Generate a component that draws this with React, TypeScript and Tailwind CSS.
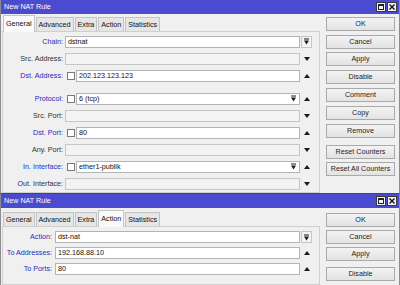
import React from "react"

type Row = {
  label: string
  active?: boolean
  kind: "combo" | "disabled" | "check" | "text"
  value?: string
  drop?: boolean
  arrow?: "up" | "down"
  gapBefore?: boolean
}

const topRows: Row[] = [
  { label: "Chain:", active: true, kind: "combo", value: "dstnat" },
  { label: "Src. Address:", kind: "disabled", arrow: "down" },
  { label: "Dst. Address:", active: true, kind: "check", value: "202.123.123.123", arrow: "up" },
  { label: "Protocol:", active: true, kind: "check", value: "6 (tcp)", drop: true, arrow: "up", gapBefore: true },
  { label: "Src. Port:", kind: "disabled", arrow: "down" },
  { label: "Dst. Port:", active: true, kind: "check", value: "80", arrow: "up" },
  { label: "Any. Port:", kind: "disabled", arrow: "down" },
  { label: "In. Interface:", active: true, kind: "check", value: "ether1-publik", drop: true, arrow: "up" },
  { label: "Out. Interface:", kind: "disabled", arrow: "down" },
]

const bottomRows: Row[] = [
  { label: "Action:", active: true, kind: "combo", value: "dst-nat" },
  { label: "To Addresses:", active: true, kind: "text", value: "192.168.88.10", arrow: "up" },
  { label: "To Ports:", active: true, kind: "text", value: "80", arrow: "up" },
]

const tabs = ["General", "Advanced", "Extra", "Action", "Statistics"]

const DropIcon = () => (
  <svg width="5" height="7" viewBox="0 0 5 7">
    <rect x="0" y="0.5" width="5" height="1" fill="#1a1a1a" />
    <path d="M0 2.5h5L2.5 6.5z" fill="#1a1a1a" />
  </svg>
)

const Arrow = ({ dir }: { dir: "up" | "down" }) => (
  <svg width="6" height="4" viewBox="0 0 6 4">
    {dir == "up" ? <path d="M0 4h6L3 0z" fill="#1a1a1a" /> : <path d="M0 0h6L3 4z" fill="#1a1a1a" />}
  </svg>
)

const TitleBar = ({ title }: { title: string }) => (
  <div className="flex h-[14px] items-center justify-between bg-[#4b4bd0] pl-[3px] pr-[2px] text-white">
    <span>{title}</span>
    <div className="flex gap-[1px]">
      {/* maximize */}
      <div className="flex h-[10px] w-[10px] items-center justify-center border border-[#3a3a3a] bg-[#f2f2f2]">
        <div className="h-[6px] w-[6px] border border-[#222] border-t-2"></div>
      </div>
      {/* close */}
      <div className="flex h-[10px] w-[10px] items-center justify-center border border-[#3a3a3a] bg-[#f2f2f2]">
        <svg width="6" height="6" viewBox="0 0 6 6">
          <path d="M0.5 0.5l5 5M5.5 0.5l-5 5" stroke="#111" strokeWidth="1.4" />
        </svg>
      </div>
    </div>
  </div>
)

const Tabs = ({ selected }: { selected: string }) => (
  <div className="relative z-10 flex h-[17px] items-end gap-[1px] pl-[1px]">
    {tabs.map(t =>
      t == selected ? (
        <div key={t} className="-mb-px flex h-[17px] items-center border border-b-0 border-[#c4c4c4] bg-[#fafafa] px-[2px] pb-[1px] text-[#111]">
          {t}
        </div>
      ) : (
        <div key={t} className="flex h-[14px] items-center border border-b-0 border-[#c4c4c4] bg-[#e6e6e6] px-[2px] text-[#111]">
          {t}
        </div>
      )
    )}
  </div>
)

const Input = ({ value, white, drop, className }: { value?: string; white?: boolean; drop?: boolean; className?: string }) => (
  <div
    className={`flex h-[12px] items-center justify-between border pl-[2px] pr-[3px] text-[#111] ${
      white ? "border-[#b4b4b4] bg-white" : "border-[#c6c6c6] bg-[#f3f3f3]"
    } ${className ?? ""}`}
  >
    <span>{value}</span>
    {drop && <DropIcon />}
  </div>
)

const FieldRow = ({ row, labelW, fieldW, gap, h }: { row: Row; labelW: string; fieldW: string; gap: string; h: string }) => (
  <div className={`flex ${h} items-center ${row.gapBefore ? "mt-[6px]" : ""}`}>
    <span className={`${labelW} shrink-0 text-right ${row.active ? "text-[#2b2bbd]" : "text-[#303030]"}`}>{row.label}</span>
    <div className={`${gap} flex ${fieldW} shrink-0 items-center`}>
      {row.kind == "check" && (
        <>
          <div className="ml-[2px] h-[8px] w-[8px] shrink-0 border border-[#7a7a7a] bg-white"></div>
          <Input value={row.value} white drop={row.drop} className="ml-[1px] flex-1" />
        </>
      )}
      {row.kind == "disabled" && <Input className="flex-1" />}
      {(row.kind == "text" || row.kind == "combo") && <Input value={row.value} white className="flex-1" />}
    </div>
    {row.kind == "combo" ? (
      <div className="ml-[1px] flex h-[12px] w-[11px] items-center justify-center border border-[#c6c6c6] bg-[#f3f3f3]">
        <DropIcon />
      </div>
    ) : (
      <div className="flex pl-[4px]">{row.arrow && <Arrow dir={row.arrow} />}</div>
    )}
  </div>
)

const Btn = ({ label, mt }: { label: string; mt: string }) => (
  <div className={`${mt} flex h-[14px] w-[69px] items-center justify-center border border-[#a9a9a9] bg-gradient-to-b from-[#f3f3f3] to-[#e3e3e3] text-[#1e1e1e]`}>
    {label}
  </div>
)

const App = () => {
  return (
    <div className="h-[285px] w-[400px] overflow-hidden bg-[#f0f0f0] font-['Liberation_Sans',Arial,sans-serif] text-[7.2px] leading-none">
      {/* top window */}
      <div className="flex h-[193px] flex-col border-x border-[#8c8c8c] bg-[#f0f0f0]">
        <TitleBar title="New NAT Rule" />
        <div className="flex flex-1">
          <div className="ml-[1px] flex w-[318px] flex-col">
            <Tabs selected="General" />
            <div className="flex-1 border border-[#cfcfcf] pt-[1px]">
              {topRows.map(r => (
                <FieldRow key={r.label} row={r} labelW="w-[60px]" fieldW="w-[235px]" gap="ml-[2px]" h="h-[17px]" />
              ))}
            </div>
          </div>
          <div className="flex flex-col pl-[6px] pt-[3px]">
            <Btn label="OK" mt="mt-0" />
            <Btn label="Cancel" mt="mt-[4px]" />
            <Btn label="Apply" mt="mt-[3px]" />
            <Btn label="Disable" mt="mt-[4px]" />
            <Btn label="Comment" mt="mt-[4px]" />
            <Btn label="Copy" mt="mt-[4px]" />
            <Btn label="Remove" mt="mt-[4px]" />
            <Btn label="Reset Counters" mt="mt-[7px]" />
            <Btn label="Reset All Counters" mt="mt-[3px]" />
          </div>
        </div>
      </div>

      {/* bottom window */}
      <div className="flex h-[92px] flex-col border-x border-t border-[#8c8c8c] border-t-[#4a4a4a] bg-[#f0f0f0]">
        <TitleBar title="New NAT Rule" />
        <div className="flex flex-1">
          <div className="ml-[1px] flex w-[318px] flex-col">
            <div className="h-[1px]"></div>
            <Tabs selected="Action" />
            <div className="flex-1 border border-[#cfcfcf] pt-[2px]">
              {bottomRows.map(r => (
                <FieldRow key={r.label} row={r} labelW="w-[49px]" fieldW="w-[245px]" gap="ml-[3px]" h="h-[16px]" />
              ))}
            </div>
          </div>
          <div className="flex flex-col pl-[6px] pt-[5px]">
            <Btn label="OK" mt="mt-0" />
            <Btn label="Cancel" mt="mt-[3px]" />
            <Btn label="Apply" mt="mt-[3px]" />
            <Btn label="Disable" mt="mt-[6px]" />
          </div>
        </div>
      </div>
    </div>
  )
}

export default App
